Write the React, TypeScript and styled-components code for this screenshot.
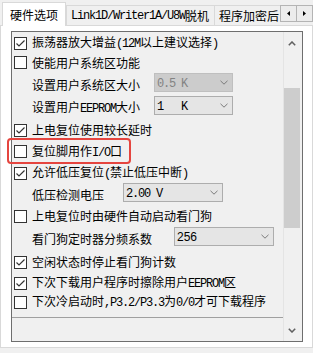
import React from 'react';
import styled, { createGlobalStyle } from 'styled-components';

const GlobalStyle = createGlobalStyle`
  html, body {
    margin: 0;
    padding: 0;
    background: #f0f0f0;
  }
  body {
    font-family: "Noto Sans CJK SC", "Liberation Sans", sans-serif;
    font-size: 12px;
    color: #000;
  }
`;

// ASCII runs are drawn in a narrow fixed-width serif, like the dialog's half-width latin
const ASCII_RUN = /([\x20-\x7e]+)/;

const Latin = styled.span`
  font-family: "Liberation Mono", monospace;
  letter-spacing: -1.2px;
  white-space: pre;
`;

const Txt = ({ children }: { children: string }) => (
  <>
    {children
      .split(ASCII_RUN)
      .filter(Boolean)
      .map((part, i) =>
        ASCII_RUN.test(part) ? (
          <Latin key={i}>{part}</Latin>
        ) : (
          <React.Fragment key={i}>{part}</React.Fragment>
        ),
      )}
  </>
);

const Window = styled.div`
  width: 313px;
  height: 353px;
  background: #f0f0f0;
  overflow: hidden;
  display: flex;
  flex-direction: column;
`;

/* ---------- tab strip ---------- */

const TabStrip = styled.div`
  height: 25px;
  display: flex;
  align-items: flex-end;
  padding-left: 2px;
`;

const TabList = styled.div`
  flex: 1;
  min-width: 0;
  display: flex;
  align-items: flex-end;
  overflow-x: clip;
  overflow-y: visible;
`;

const Tab = styled.div<{ $active?: boolean }>`
  flex: none;
  box-sizing: border-box;
  display: flex;
  align-items: center;
  white-space: nowrap;
  border: 1px solid #d9d9d9;
  border-bottom: none;
  height: ${({ $active }) => ($active ? '24px' : '20px')};
  padding: ${({ $active }) => ($active ? '0 7px' : '0 5px 0 4px')};
  margin-bottom: ${({ $active }) => ($active ? '-1px' : '0')};
  margin-left: ${({ $active }) => ($active ? '0' : '-1px')};
  background: ${({ $active }) => ($active ? '#ffffff' : '#f0f0f0')};
  position: relative;
  z-index: ${({ $active }) => ($active ? 1 : 0)};
  &:nth-child(2) {
    margin-left: 0;
  }
`;

const TabArrows = styled.div`
  align-self: flex-start;
  margin-top: 5px;
  display: flex;
`;

const ArrowButton = styled.div`
  box-sizing: border-box;
  width: 17px;
  height: 17px;
  border: 1px solid #b4b4b4;
  background: #ececec;
  display: flex;
  align-items: center;
  justify-content: center;
  & + & {
    border-left: none;
    width: 16px;
  }
`;

/* ---------- tab page ---------- */

const TabPage = styled.div`
  box-sizing: border-box;
  width: 313px;
  height: 323px;
  border: 1px solid #d9d9d9;
  background: #ffffff;
  padding: 5px 9px 5px 10px;
  display: flex;
`;

const ScrollPanel = styled.div`
  flex: 1;
  box-sizing: border-box;
  border: 1px solid #6e6e6e;
  background: #f0f0f0;
  display: flex;
`;

const PanelContent = styled.div`
  flex: 1;
  min-width: 0;
  padding-top: 2px;
  display: flex;
  flex-direction: column;
`;

const OptionList = styled.div`
  padding-left: 2px;
  display: flex;
  flex-direction: column;
`;

const Row = styled.div<{ $h: number }>`
  position: relative;
  height: ${({ $h }) => $h}px;
  display: flex;
  align-items: center;
  line-height: 16px;
  white-space: nowrap;
`;

const CheckBox = styled.div`
  flex: none;
  box-sizing: border-box;
  width: 13px;
  height: 13px;
  margin-right: 5px;
  border: 1px solid #333333;
  background: #ffffff;
  display: flex;
  align-items: center;
  justify-content: center;
`;

const Label = styled.span<{ $w?: number }>`
  flex: none;
  margin-left: ${({ $w }) => ($w ? '18px' : '0')};
  width: ${({ $w }) => ($w ? `${$w}px` : 'auto')};
`;

const ComboBox = styled.div<{ $w: number; $disabled?: boolean }>`
  flex: none;
  box-sizing: border-box;
  width: ${({ $w }) => $w}px;
  height: 19px;
  margin-bottom: 4px;
  padding: 0 4px 0 2px;
  border: 1px solid ${({ $disabled }) => ($disabled ? '#bfbfbf' : '#adadad')};
  background: ${({ $disabled }) => ($disabled ? '#cccccc' : '#e5e5e5')};
  color: ${({ $disabled }) => ($disabled ? '#838383' : '#000000')};
  display: flex;
  align-items: center;
  justify-content: space-between;
`;

const ComboValue = styled.span<{ $sans?: boolean }>`
  font-family: ${({ $sans }) =>
    $sans ? '"Liberation Sans", sans-serif' : 'inherit'};
`;

/* red annotation frame drawn over the row */
const Highlight = styled.div`
  position: absolute;
  left: -7px;
  top: -3px;
  width: 124px;
  height: 26px;
  box-sizing: border-box;
  border: 2px solid #e5453f;
  border-radius: 4px;
  pointer-events: none;
`;

const Divider = styled.div`
  margin-top: 5px;
  height: 1px;
  background: #a0a0a0;
`;

/* ---------- vertical scrollbar ---------- */

const ScrollBar = styled.div`
  flex: none;
  width: 18px;
  border-left: 1px solid #e4e4e4;
  display: flex;
  flex-direction: column;
`;

const ScrollButton = styled.div`
  height: 22px;
  display: flex;
  align-items: center;
  justify-content: center;
  padding-right: 2px;
`;

const ScrollTrack = styled.div<{ $offset: number }>`
  flex: 1;
  padding-top: ${({ $offset }) => $offset}px;
`;

const ScrollThumb = styled.div<{ $h: number }>`
  width: 16px;
  height: ${({ $h }) => $h}px;
  background: #cdcdcd;
`;

const CheckMark = () => (
  <svg width="11" height="11" viewBox="0 0 11 11">
    <polyline
      points="1.5,5.5 4,8 9.5,2.5"
      fill="none"
      stroke="#333"
      strokeWidth="1.2"
    />
  </svg>
);

const ComboChevron = () => (
  <svg width="8" height="5" viewBox="0 0 8 5">
    <polyline points="0.5,0.8 4,4.2 7.5,0.8" fill="none" stroke="#7a7a7a" strokeWidth="1" />
  </svg>
);

const ScrollChevron = ({ up }: { up?: boolean }) => (
  <svg width="8" height="5" viewBox="0 0 8 5">
    <polyline
      points={up ? '0.8,4.3 4,1 7.2,4.3' : '0.8,0.7 4,4 7.2,0.7'}
      fill="none"
      stroke="#606060"
      strokeWidth="1.5"
    />
  </svg>
);

const TabArrow = ({ left }: { left?: boolean }) => (
  <svg width="3" height="5" viewBox="0 0 3 5">
    <polygon points={left ? '3,0 0,2.5 3,5' : '0,0 3,2.5 0,5'} fill="#000" />
  </svg>
);

type RowDef = {
  h: number;
  text: string;
  check?: boolean;
  labelWidth?: number;
  combo?: { w: number; value: string; disabled?: boolean; sans?: boolean };
  highlight?: boolean;
};

const rows: RowDef[] = [
  { h: 18, check: true, text: '振荡器放大增益(12M以上建议选择)' },
  { h: 21, check: false, text: '使能用户系统区功能' },
  { h: 23, text: '设置用户系统区大小', labelWidth: 122, combo: { w: 79, value: '0.5 K', disabled: true } },
  { h: 23, text: '设置用户EEPROM大小', labelWidth: 122, combo: { w: 79, value: '1   K' } },
  { h: 22, check: true, text: '上电复位使用较长延时' },
  { h: 21, check: false, text: '复位脚用作I/O口', highlight: true },
  { h: 22, check: true, text: '允许低压复位(禁止低压中断)' },
  { h: 21, text: '低压检测电压', labelWidth: 91, combo: { w: 100, value: '2.00 V' } },
  { h: 22, check: false, text: '上电复位时由硬件自动启动看门狗' },
  { h: 23, text: '看门狗定时器分频系数', labelWidth: 142, combo: { w: 100, value: '256', sans: true } },
  { h: 24, check: true, text: '空闲状态时停止看门狗计数' },
  { h: 18, check: true, text: '下次下载用户程序时擦除用户EEPROM区' },
  { h: 20, check: false, text: '下次冷启动时,P3.2/P3.3为0/0才可下载程序' },
];

const OptionRow = ({ row }: { row: RowDef }) => (
  <Row $h={row.h}>
    {row.check !== undefined && <CheckBox>{row.check && <CheckMark />}</CheckBox>}
    <Label $w={row.labelWidth}>
      <Txt>{row.text}</Txt>
    </Label>
    {row.combo && (
      <ComboBox $w={row.combo.w} $disabled={row.combo.disabled}>
        <ComboValue $sans={row.combo.sans}>
          {row.combo.sans ? row.combo.value : <Txt>{row.combo.value}</Txt>}
        </ComboValue>
        <ComboChevron />
      </ComboBox>
    )}
    {row.highlight && <Highlight />}
  </Row>
);

export default function App() {
  return (
    <>
      <GlobalStyle />
      <Window>
        <TabStrip>
          <TabList>
            <Tab $active>硬件选项</Tab>
            <Tab>
              <Txt>Link1D/Writer1A/U8W脱机</Txt>
            </Tab>
            <Tab>程序加密后</Tab>
          </TabList>
          <TabArrows>
            <ArrowButton>
              <TabArrow left />
            </ArrowButton>
            <ArrowButton>
              <TabArrow />
            </ArrowButton>
          </TabArrows>
        </TabStrip>
        <TabPage>
          <ScrollPanel>
            <PanelContent>
              <OptionList>
                {rows.map((row, i) => (
                  <OptionRow key={i} row={row} />
                ))}
              </OptionList>
              <Divider />
            </PanelContent>
            <ScrollBar>
              <ScrollButton>
                <ScrollChevron up />
              </ScrollButton>
              <ScrollTrack $offset={34}>
                <ScrollThumb $h={140} />
              </ScrollTrack>
              <ScrollButton>
                <ScrollChevron />
              </ScrollButton>
            </ScrollBar>
          </ScrollPanel>
        </TabPage>
      </Window>
    </>
  );
}
